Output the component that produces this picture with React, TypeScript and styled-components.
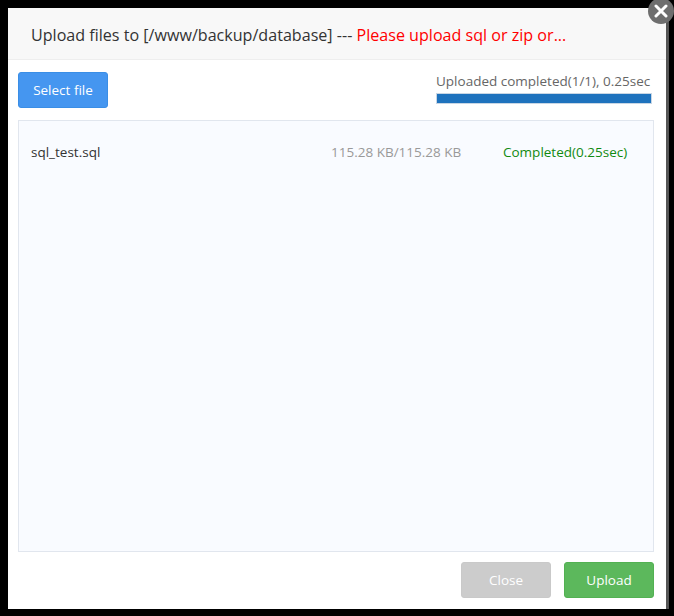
import React from "react";
import styled, { createGlobalStyle } from "styled-components";

const Global = createGlobalStyle`
  html, body { margin: 0; padding: 0; background: #000; }
  body { padding: 8px 8px 0 8px; font-family: "Open Sans", "Noto Sans", sans-serif; }
  * { box-sizing: border-box; }
`;

const Dialog = styled.div`
  position: relative;
  width: 658px;
  height: 601px;
  background: #fff;
  display: flex;
  flex-direction: column;
  box-shadow: 3px 0 0 #555;
`;

const Header = styled.div`
  height: 52px;
  padding: 4px 0 0 23px;
  background: #f8f8f8;
  border-bottom: 1px solid #eee;
  font-size: 16.1px;
  line-height: 47px;
  color: #333;
  white-space: nowrap;
`;

const Warn = styled.span`
  color: #f00;
`;

const CloseCircle = styled.button`
  position: absolute;
  top: -10px;
  right: -8px;
  width: 26px;
  height: 26px;
  padding: 0;
  border: none;
  border-radius: 50%;
  background: #6e6e6e;
  display: flex;
  align-items: center;
  justify-content: center;
`;

const Body = styled.div`
  flex: 1;
  display: flex;
  flex-direction: column;
  padding: 12px 12px 0 10px;
  gap: 12px;
`;

const Toolbar = styled.div`
  display: flex;
  justify-content: space-between;
  align-items: flex-start;
`;

const Button = styled.button<{ $tone: "blue" | "gray" | "green" }>`
  height: 36px;
  padding: 0;
  border: 1px solid
    ${(p) => (p.$tone === "blue" ? "#3a8ee6" : p.$tone === "green" ? "#52b152" : "#c9c9c9")};
  border-radius: 3px;
  background: ${(p) => (p.$tone === "blue" ? "#4596f0" : p.$tone === "green" ? "#5cb85c" : "#cccccc")};
  color: #fff;
  font-family: "Open Sans", "Noto Sans", sans-serif;
  font-size: 13.5px;
  width: 90px;
`;

const Progress = styled.div`
  display: flex;
  flex-direction: column;
  align-items: flex-start;
  width: 218px;
`;

const ProgressText = styled.div`
  font-size: 13.5px;
  line-height: 18px;
  color: #666;
  white-space: nowrap;
`;

const Bar = styled.div`
  margin-top: 3px;
  width: 216px;
  height: 11px;
  border: 1px solid #c8d6e4;
  background: #eee;
`;

const Fill = styled.div`
  height: 100%;
  background: #1e72bd;
`;

const FileBox = styled.div`
  flex: 1;
  border: 1px solid #e1e6ee;
  background: #f9fbff;
  padding: 21px 0 0 0;
`;

const Row = styled.div`
  display: grid;
  grid-template-columns: 312px 172px 1fr;
  align-items: center;
  height: 20px;
  font-size: 13.5px;
`;

const Name = styled.span`
  padding-left: 12px;
  color: #333;
`;

const Size = styled.span`
  color: #999;
`;

const Status = styled.span`
  color: #118a11;
`;

const Footer = styled.div`
  display: flex;
  justify-content: flex-end;
  gap: 13px;
  padding: 10px 12px 11px 0;
`;

export default function App() {
  return (
    <>
      <Global />
      <Dialog>
        <Header>
          Upload files to [/www/backup/database] --- <Warn>Please upload sql or zip or...</Warn>
        </Header>
        <CloseCircle aria-label="close">
          <svg width="14" height="14" viewBox="0 0 14 14">
            <path d="M2 2 L12 12 M12 2 L2 12" stroke="#fff" strokeWidth="3" strokeLinecap="round" />
          </svg>
        </CloseCircle>
        <Body>
          <Toolbar>
            <Button $tone="blue">Select file</Button>
            <Progress>
              <ProgressText>Uploaded completed(1/1), 0.25sec</ProgressText>
              <Bar>
                <Fill style={{ width: "100%" }} />
              </Bar>
            </Progress>
          </Toolbar>
          <FileBox>
            <Row>
              <Name>sql_test.sql</Name>
              <Size>115.28 KB/115.28 KB</Size>
              <Status>Completed(0.25sec)</Status>
            </Row>
          </FileBox>
        </Body>
        <Footer>
          <Button $tone="gray">Close</Button>
          <Button $tone="green">Upload</Button>
        </Footer>
      </Dialog>
    </>
  );
}
